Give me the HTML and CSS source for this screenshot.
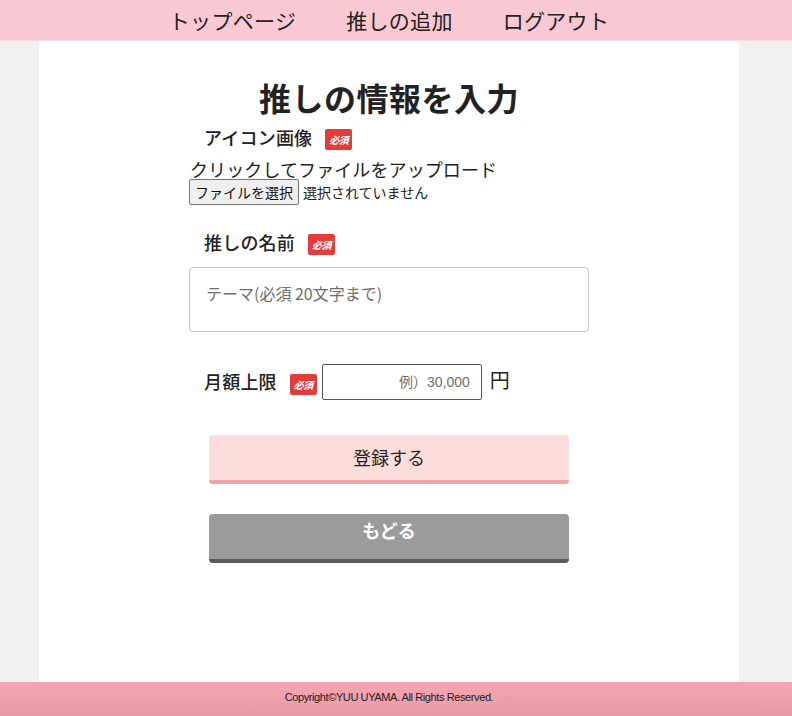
FILE: index.html
```
<!DOCTYPE html>
<html lang="ja">
<head>
<meta charset="utf-8">
<title>推しの情報を入力</title>
<link rel="stylesheet" href="styles.css">
</head>
<body>
<header class="site-header">
  <nav class="nav">
    <a class="nav-link" href="#">トップページ</a>
    <a class="nav-link" href="#">推しの追加</a>
    <a class="nav-link" href="#">ログアウト</a>
  </nav>
</header>
<div class="shell">
  <main class="main">
    <h1 class="title">推しの情報を入力</h1>
    <form class="form">
      <div class="field-head head-icon">
        <span class="label">アイコン画像</span><span class="badge">必須</span>
      </div>
      <p class="upload-text">クリックしてファイルをアップロード</p>
      <div class="file-row">
        <button type="button" class="file-btn">ファイルを選択</button>
        <span class="file-status">選択されていません</span>
      </div>
      <div class="field-head head-name">
        <span class="label">推しの名前</span><span class="badge">必須</span>
      </div>
      <textarea class="name-input" placeholder="テーマ(必須 20文字まで)"></textarea>
      <div class="money-row">
        <span class="label">月額上限</span><span class="badge">必須</span>
        <input class="money-input" type="text" placeholder="例）30,000">
        <span class="yen">円</span>
      </div>
      <button type="button" class="btn btn-submit">登録する</button>
      <button type="button" class="btn btn-back">もどる</button>
    </form>
  </main>
</div>
<footer class="site-footer">
  <p class="copyright">Copyright©YUU UYAMA. All Rights Reserved.</p>
</footer>
</body>
</html>
```
FILE: styles.css
```
* { box-sizing: border-box; }
html, body { margin: 0; padding: 0; }
body {
  background: #f1f1f1;
  color: #222;
  font-family: "Noto Sans CJK JP", "Noto Sans", sans-serif;
}

.site-header {
  height: 41px;
  background: #f8c9d2;
  border-bottom: 1px solid #fcdce2;
}
.nav {
  width: 778px;
  height: 40px;
  display: flex;
  justify-content: center;
  align-items: center;
  gap: 50px;
}
.nav-link {
  color: #222;
  text-decoration: none;
  font-size: 21px;
  line-height: 40px;
  letter-spacing: 0.3px;
}

.shell { width: 778px; }
.main {
  width: 700px;
  margin: 0 auto;
  min-height: 641px;
  background: #fff;
  overflow: hidden;
}
.title {
  margin: 32px 0 0;
  font-size: 32px;
  line-height: 48px;
  font-weight: 700;
  text-align: center;
  letter-spacing: 0.5px;
  color: #222;
}

.form {
  width: 400px;
  margin: 0 auto;
  display: flex;
  flex-direction: column;
}
.field-head {
  display: flex;
  align-items: center;
  height: 24px;
  padding-left: 15px;
}
.head-icon { margin-top: 4px; }
.head-name { margin-top: 25px; }
.label {
  font-size: 18px;
  font-weight: 500;
  line-height: 24px;
  letter-spacing: 0.2px;
}
.badge {
  display: inline-block;
  width: 27px;
  height: 21px;
  margin-left: 13px;
  margin-top: 4px;
  background: #e53b3b;
  color: #fff;
  border-radius: 2px;
  font-size: 10px;
  font-weight: 700;
  font-style: italic;
  line-height: 21px;
  text-align: center;
  letter-spacing: -0.5px;
}
.upload-text {
  margin: 10px 0 0 1px;
  font-size: 18px;
  line-height: 20px;
  letter-spacing: 0.1px;
}
.file-row {
  display: flex;
  align-items: center;
  gap: 4px;
  height: 26px;
}
.file-btn {
  height: 26px;
  padding: 0 5px;
  white-space: nowrap;
  background: #efefef;
  border: 1px solid #767676;
  border-radius: 2px;
  font-family: "Noto Sans CJK JP", sans-serif;
  font-size: 14px;
  color: #111;
}
.file-status {
  font-size: 14px;
  color: #222;
}
.name-input {
  display: block;
  margin-top: 13px;
  width: 400px;
  height: 65px;
  padding: 14px 16px;
  border: 1px solid #c4c4c4;
  border-radius: 4px;
  font-family: "Noto Sans CJK JP", sans-serif;
  font-size: 16px;
  line-height: 22px;
  resize: none;
}
.name-input::placeholder { color: #6f6f6f; }

.money-row {
  margin-top: 32px;
  display: flex;
  align-items: center;
  height: 36px;
  padding-left: 15px;
}
.money-row .label { margin-top: -3px; }
.money-input {
  width: 160px;
  height: 36px;
  margin-left: 5px;
  padding: 0 11px;
  border: 1px solid #555;
  border-radius: 2px;
  text-align: right;
  font-family: "Liberation Sans", "Noto Sans CJK JP", sans-serif;
  font-size: 14px;
}
.money-input::placeholder { color: #6f6f6f; }
.yen {
  margin-left: 8px;
  margin-top: -6px;
  font-size: 20px;
}

.btn {
  display: block;
  width: 360px;
  height: 49px;
  margin-left: 20px;
  border: none;
  border-radius: 4px;
  font-family: "Noto Sans CJK JP", sans-serif;
  font-size: 18px;
  cursor: pointer;
}
.btn-submit {
  margin-top: 35px;
  background: #fddcdc;
  border-bottom: 4px solid #f0a2a8;
  color: #222;
  padding: 0 0 2px;
}
.btn-back {
  margin-top: 30px;
  background: #9b9b9b;
  border-bottom: 4px solid #5a5a5a;
  color: #fff;
  font-weight: 700;
  padding: 0 0 13px;
}

.site-footer {
  height: 34px;
  background: linear-gradient(#f6a4b1, #e99aa8);
}
.copyright {
  margin: 0;
  width: 778px;
  padding-top: 7px;
  text-align: center;
  font-family: "Liberation Sans", Arial, sans-serif;
  font-size: 11px;
  line-height: 16px;
  letter-spacing: -0.4px;
  color: #222;
}
```
